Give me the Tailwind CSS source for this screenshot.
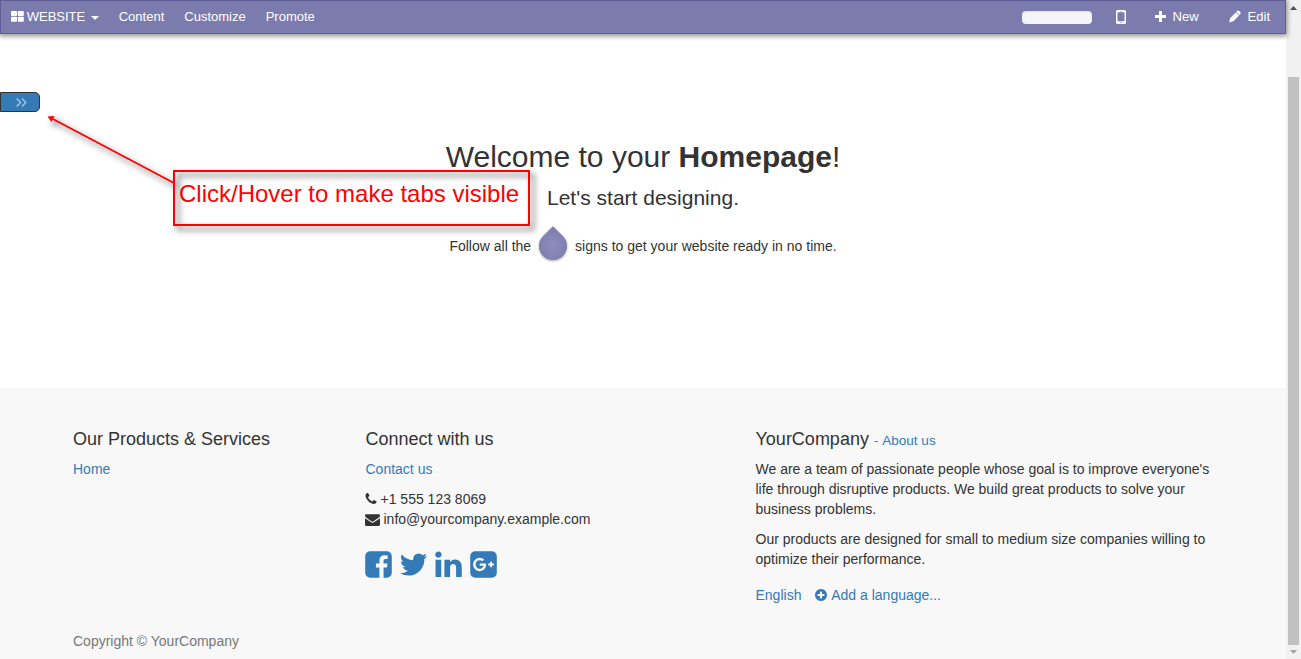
<!DOCTYPE html>
<html lang="en">
<head>
<meta charset="utf-8">
<title>Homepage | YourCompany</title>
<script src="https://cdn.jsdelivr.net/npm/@tailwindcss/browser@4"></script>
</head>
<body class="flex h-[659px] overflow-hidden bg-white font-['Liberation_Sans',Arial,sans-serif] text-[14px] leading-[20px] text-[#333]">
<div class="relative flex h-full w-[1286px] shrink-0 flex-col">
  <nav class="flex h-[34px] shrink-0 items-center border border-[#5f5e97] bg-[#7c7bad] pl-[10px] pr-[15px] text-[13px] text-white shadow-[0_1px_5px_1px_rgba(0,0,0,0.45)]">
    <a class="flex items-center">
      <svg class="-mt-[2px] mr-[3px] h-[11px] w-[13px]" viewBox="0 0 13 11" fill="currentColor"><rect width="6" height="5" rx=".7"/><rect x="6.8" width="6" height="5" rx=".7"/><rect y="5.8" width="6" height="5" rx=".7"/><rect x="6.8" y="5.8" width="6" height="5" rx=".7"/></svg>
      <span class="-ml-[.3px]">WEBSITE</span>
      <span class="ml-[5.5px] mt-[2px] border-x-4 border-t-4 border-x-transparent border-t-white"></span>
    </a>
    <a class="ml-[20px]">Content</a>
    <a class="ml-[20px]">Customize</a>
    <a class="ml-[20px]">Promote</a>
    <div class="ml-auto flex items-center">
      <div class="h-[13px] w-[70px] rounded-[4px] bg-[#f5f5f5] shadow-[inset_0_1px_2px_rgba(0,0,0,0.1)]"></div>
      <svg class="ml-[24px] h-[14px] w-[10px]" viewBox="0 0 10 14"><path fill="#fff" fill-rule="evenodd" d="M1.500 0h7A1.500 1.500 0 0 1 10 1.500v11A1.500 1.500 0 0 1 8.500 14h-7A1.500 1.500 0 0 1 0 12.500v-11A1.500 1.500 0 0 1 1.500 0zM1.500 2.200v9h7v-9zM4 .9v.5h2V.9zM5 11.900a.7.7 0 1 0 0 1.400.7.7 0 0 0 0-1.400z"/></svg>
      <svg class="-mt-[2px] ml-[28px] h-[13px] w-[13px]" viewBox="0 0 13 13" fill="#fff"><path d="M5 1.500q0-.5.500-.5h2q.5 0 .5.500V5h3.500q.5 0 .5.500v2q0 .5-.5.500H8v3.500q0 .5-.5.500h-2q-.5 0-.5-.5V8H1.500Q1 8 1 7.500v-2Q1 5 1.500 5H5z"/></svg>
      <span class="ml-[6px]">New</span>
      <svg class="-mt-[2px] ml-[29px] h-[14px] w-[14px]" viewBox="0 0 14 14" fill="#fff"><path d="M9 2.200Q10 1.100 11 1.900L12.400 3.300Q13.200 4.200 12.300 5.100L11.500 5.900L8.200 3zM7.800 3.400L11.100 6.400L5.300 12.300L1.100 13.400L2.100 9.200z"/><path d="M3.600 9.800L8.400 5" stroke="#aaa9cc" stroke-width=".4"/></svg>
      <span class="ml-[6px]">Edit</span>
    </div>
  </nav>

  <main class="flex h-[354px] shrink-0 flex-col">
    <button class="mt-[58px] flex h-[20px] w-[40px] items-center justify-center rounded-r-[5px] border border-[#333] bg-[#337ab7]">
      <svg class="ml-[2px] h-[9px] w-[11px]" viewBox="0 0 11 9" fill="none" stroke="#b5cfe5" stroke-width="1.100"><path d="M.7.5l4 4-4 4M5.900.5l4 4-4 4"/></svg>
    </button>
    <div class="mt-[28px] flex flex-col items-center">
      <h2 class="text-[30px] leading-[33px]">Welcome to your <b>Homepage</b>!</h2>
      <p class="mt-[10px] text-[21px] leading-[30px]">Let's start designing.</p>
      <div class="mt-[13px] flex h-[36px] items-center">
        <span class="mt-[3px]">Follow all the</span>
        <svg class="ml-[4px] mr-[4px] h-[42px] w-[36px] overflow-visible" viewBox="0 0 36 42">
          <defs><radialGradient id="drop" cx=".5" cy=".57" r=".5"><stop offset="0" stop-color="#8f8dbc"/><stop offset="1" stop-color="#7f7eaf"/></radialGradient></defs>
          <path class="drop-shadow-[0_1px_1px_rgba(0,0,0,0.35)]" fill="url(#drop)" d="M18 3.300L27.900 13.100A14 14 0 1 1 8.100 13.100z"/>
        </svg>
        <span class="mt-[3px]">signs to get your website ready in no time.</span>
      </div>
    </div>
  </main>

  <footer class="grow bg-[#f8f8f8] pt-[41px]">
    <div class="mx-auto flex h-[202px] w-[1170px]">
      <section class="w-[292.5px] px-[15px]">
        <h4 class="text-[18px]">Our Products &amp; Services</h4>
        <a class="mt-[10px] block text-[#337ab7]">Home</a>
      </section>
      <section class="w-[390px] px-[15px]">
        <h4 class="text-[18px]">Connect with us</h4>
        <a class="mt-[10px] block text-[#337ab7]">Contact us</a>
        <div class="mt-[10px] flex items-center"><svg class="-ml-[1.5px] mr-[2.5px] h-[14px] w-[14px]" viewBox="0 0 1792 1792" fill="currentColor"><path d="M1600 1240q0 27-10 70.500t-21 68.500q-21 50-122 106-94 51-186 51-27 0-52.500-3.500t-57.500-12.500-47.500-14.500-55.500-20.500-49-18q-98-35-175-83-128-79-264.500-215.500t-215.500-264.500q-48-77-83-175-3-9-18-49t-20.500-55.500-14.500-47.500-12.500-57.500-3.500-52.500q0-92 51-186 56-101 106-122 25-11 68.500-21t70.500-10q14 0 21 3 18 6 53 76 11 19 30 54t35 63.500 31 53.500q3 4 17.500 25t21.500 35.500 7 28.500q0 20-28.500 50t-62 55-62 53-28.500 46q0 9 5 22.500t8.500 20.500 14 24 11.500 19q76 137 174 235t235 174q2 1 19 11.500t24 14 20.500 8.500 22.500 5q18 0 46-28.500t53-62 55-62 50-28.500q14 0 28.500 7t35.500 21.500 25 17.500q25 15 53.500 31t63.500 35 54 30q70 35 76 53 3 7 3 21z"/></svg>+1 555 123 8069</div>
        <div class="flex items-center"><svg class="-ml-[.5px] mr-[3.5px] h-[15px] w-[15px]" viewBox="0 0 1792 1792" fill="currentColor"><path d="M1792 710v794q0 66-47 113t-113 47h-1472q-66 0-113-47t-47-113v-794q44 49 101 87 362 246 497 345 57 42 92.500 65.500t94.500 48 110 24.500h2q51 0 110-24.500t94.500-48 92.500-65.500q170-123 498-345 57-39 100-87zm0-294q0 79-49 151t-122 123q-376 261-468 325-10 7-42.500 31t-54 38.500-52 32.500-57.500 27-50 9h-2q-23 0-50-9t-57.500-27-52-32.500-54-38.500-42.500-31q-91-64-262-182.500t-205-142.500q-62-42-117-115.500t-55-136.500q0-78 41.500-130t118.500-52h1472q65 0 112.500 47t47.500 113z"/></svg>info@yourcompany.example.com</div>
        <div class="-ml-[2.5px] mt-[20px] flex gap-[4px] text-[#337ab7]">
          <svg class="h-[31px] w-[31px]" viewBox="0 0 1792 1792" fill="currentColor"><path d="M1376 128q119 0 203.500 84.500t84.500 203.500v960q0 119-84.500 203.500t-203.500 84.500h-188v-595h199l30-232h-229v-148q0-56 23.500-84t91.500-28l122-1v-207q-63-9-178-9-136 0-217.500 80t-81.500 226v171h-200v232h200v595h-532q-119 0-203.500-84.500t-84.500-203.500v-960q0-119 84.500-203.500t203.500-84.500h960z"/></svg>
          <svg class="h-[31px] w-[31px]" viewBox="0 0 1792 1792" fill="currentColor"><path d="M1684 408q-67 98-162 167 1 14 1 42 0 130-38 259.500t-115.500 248.500-184.500 210.500-258 146-323 54.500q-271 0-496-145 35 4 78 4 225 0 401-138-105-2-188-64.500t-114-159.500q33 5 61 5 43 0 85-11-112-23-185.500-111.500t-73.500-205.500v-4q68 38 146 41-66-44-105-115t-39-154q0-88 44-163 121 149 294.500 238.500t371.500 99.500q-8-38-8-74 0-134 94.500-228.500t228.500-94.500q140 0 236 102 109-21 205-78-37 115-142 178 93-10 186-50z"/></svg>
          <svg class="h-[31px] w-[31px]" viewBox="0 0 1792 1792" fill="currentColor"><path d="M477 625v991h-330v-991h330zm21-306q1 73-50.500 122t-135.500 49h-2q-82 0-132-49t-50-122q0-74 51.500-122.500t134.500-48.500 133 48.500 51 122.500zm1166 729v568h-329v-530q0-105-40.500-164.500t-126.500-59.500q-63 0-105.500 34.500t-63.500 85.500q-11 30-11 81v553h-329q2-399 2-647t-1-296l-1-48h329v144h-2q20-32 41-56t56.500-52 87-43.500 114.500-15.500q171 0 275 113.500t104 332.500z"/></svg>
          <svg class="-ml-[.5px] h-[31px] w-[31px]" viewBox="0 0 1792 1792" fill="currentColor"><path d="M1045 905q0-26-6-64h-362v132h217q-3 24-16.500 50t-37.500 53-66.500 44.500-96.500 17.500q-99 0-169-71t-70-171 70-171 169-71q92 0 153 59l104-101q-108-100-257-100-160 0-272 112.500t-112 271.500 112 271.500 272 112.500q165 0 266.500-105t101.500-270zm345 46h109v-110h-109v-110h-110v110h-110v110h110v110h110v-110zm274-535v960q0 119-84.500 203.500t-203.500 84.500h-960q-119 0-203.500-84.500t-84.500-203.500v-960q0-119 84.500-203.500t203.500-84.500h960q119 0 203.500 84.500t84.500 203.500z"/></svg>
        </div>
      </section>
      <section class="w-[487.5px] px-[15px]">
        <h4 class="h-[20px] text-[18px]">YourCompany <small class="text-[13.5px] leading-none text-[#777]">- <a class="ml-[.2px] text-[#337ab7]">About us</a></small></h4>
        <p class="mt-[10px]">We are a team of passionate people whose goal is to improve everyone's life through disruptive products. We build great products to solve your business problems.</p>
        <p class="mt-[10px]">Our products are designed for small to medium size companies willing to optimize their performance.</p>
        <div class="mt-[16px] flex items-center text-[#337ab7]"><a>English</a><svg class="ml-[13px] mr-[2.8px] h-[14px] w-[14px]" viewBox="0 0 1792 1792" fill="currentColor"><path d="M1344 960v-128q0-26-19-45t-45-19h-256v-256q0-26-19-45t-45-19h-128q-26 0-45 19t-19 45v256h-256q-26 0-45 19t-19 45v128q0 26 19 45t45 19h256v256q0 26 19 45t45 19h128q26 0 45-19t19-45v-256h256q26 0 45-19t19-45zm320-64q0 209-103 385.500t-279.500 279.500-385.500 103-385.500-103-279.500-279.500-103-385.500 103-385.500 279.500-279.500 385.500-103 385.500 103 279.500 279.500 103 385.500z"/></svg><a>Add a language...</a></div>
      </section>
    </div>
    <div class="mx-auto w-[1170px] px-[15px] text-[#777]">Copyright © YourCompany</div>
  </footer>

  <!-- Callout laid over the page -->
  <svg class="absolute left-0 top-0 h-[260px] w-[560px] drop-shadow-[4px_4px_3px_rgba(0,0,0,0.7)]" viewBox="0 0 560 260" fill="none" stroke="#f00" stroke-width="2">
    <path d="M174 183L52 118.500" stroke-width="1.800"/><path fill="#f00" stroke="none" d="M47.500 116.500L54.500 116L51.500 122z"/><rect x="174" y="171" width="355" height="54"/>
  </svg>
  <div class="absolute left-[179px] top-[180px] whitespace-nowrap text-[24px] leading-[28px] text-[#f00]">Click/Hover to make tabs visible</div>
</div>

<aside class="flex h-full w-[15px] shrink-0 flex-col items-center bg-[#f1f1f1]">
  <svg class="mt-[6px] h-[4px] w-[7px]" viewBox="0 0 7 4" fill="#505050"><path d="M0 4L3.500 0L7 4z"/></svg>
  <div class="mt-[67px] h-[568px] w-[11px] bg-[#c1c1c1]"></div>
  <svg class="mt-[5px] h-[4px] w-[7px]" viewBox="0 0 7 4" fill="#a3a3a3"><path d="M0 0L3.500 4L7 0z"/></svg>
</aside>
</body>
</html>
